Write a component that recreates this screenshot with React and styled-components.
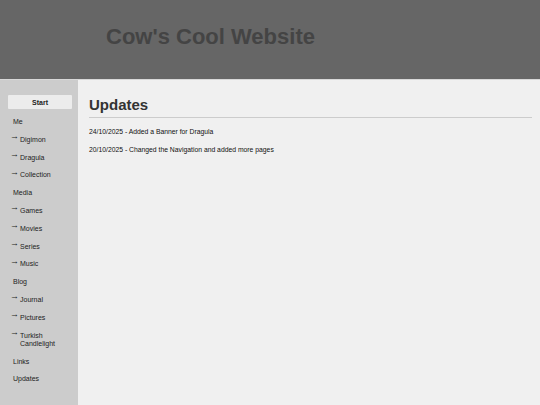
import React from 'react';
import styled, { createGlobalStyle } from 'styled-components';

const GlobalStyle = createGlobalStyle`
  html, body {
    margin: 0;
    padding: 0;
    background: #f0f0f0;
    font-family: "Liberation Sans", Arial, sans-serif;
  }
`;

const nav = [
  { label: 'Me' },
  { label: 'Digimon', sub: true },
  { label: 'Dragula', sub: true },
  { label: 'Collection', sub: true },
  { label: 'Media' },
  { label: 'Games', sub: true },
  { label: 'Movies', sub: true },
  { label: 'Series', sub: true },
  { label: 'Music', sub: true },
  { label: 'Blog' },
  { label: 'Journal', sub: true },
  { label: 'Pictures', sub: true },
  { label: 'Turkish Candlelight', sub: true },
  { label: 'Links' },
  { label: 'Updates' },
];

const updates = [
  '24/10/2025 - Added a Banner for Dragula',
  '20/10/2025 - Changed the Navigation and added more pages',
];

const App = () => {
  return (
    <Page>
      <GlobalStyle />
      <Header>
        <Title>Cow's Cool Website</Title>
      </Header>
      <Body>
        <Sidebar>
          <StartButton>Start</StartButton>
          <NavList>
            {nav.map((item) => (
              <NavItem key={item.label} $sub={item.sub}>
                {item.sub && <Arrow>→</Arrow>}
                <NavLabel>{item.label}</NavLabel>
              </NavItem>
            ))}
          </NavList>
        </Sidebar>
        <Main>
          <Heading>Updates</Heading>
          {updates.map((u) => (
            <Entry key={u}>{u}</Entry>
          ))}
        </Main>
      </Body>
    </Page>
  );
};

export default App;

const Page = styled.div`
  display: flex;
  flex-direction: column;
  height: 405px;
  overflow: hidden;
`;

const Header = styled.header`
  height: 79px;
  background: #666666;
  border-bottom: 1px solid #d8d8d8;
  display: flex;
  align-items: center;
  padding-left: 106px;
  flex-shrink: 0;
`;

const Title = styled.h1`
  margin: 0;
  font-size: 22px;
  font-weight: bold;
  color: #444444;
  margin-top: -6px;
`;

const Body = styled.div`
  display: flex;
  flex: 1;
`;

const Sidebar = styled.nav`
  width: 64px;
  background: #cccccc;
  padding: 15px 6px 0 8px;
  flex-shrink: 0;
`;

const StartButton = styled.div`
  height: 14px;
  background: #ececec;
  border-radius: 1px;
  font-size: 7px;
  font-weight: bold;
  color: #222;
  display: flex;
  align-items: center;
  justify-content: center;
`;

const NavList = styled.ul`
  list-style: none;
  margin: 9px 0 0;
  padding: 0;
  display: flex;
  flex-direction: column;
  gap: 9.6px;
`;

const NavItem = styled.li`
  display: flex;
  align-items: flex-start;
  font-size: 7px;
  line-height: 8.2px;
  color: #222;
  padding-left: ${(p) => (p.$sub ? '2px' : '5px')};
`;

const Arrow = styled.span`
  width: 10px;
  flex-shrink: 0;
  font-size: 9px;
  line-height: 6px;
  margin-top: -2.5px;
`;

const NavLabel = styled.span``;

const Main = styled.main`
  flex: 1;
  padding: 16px 8px 0 11px;
`;

const Heading = styled.h2`
  margin: 0 0 10px;
  padding-bottom: 4px;
  font-size: 15px;
  font-weight: bold;
  color: #333;
  border-bottom: 1px solid #cccccc;
`;

const Entry = styled.p`
  margin: 0 0 10px;
  font-size: 6.8px;
  line-height: 8px;
  color: #111;
`;
